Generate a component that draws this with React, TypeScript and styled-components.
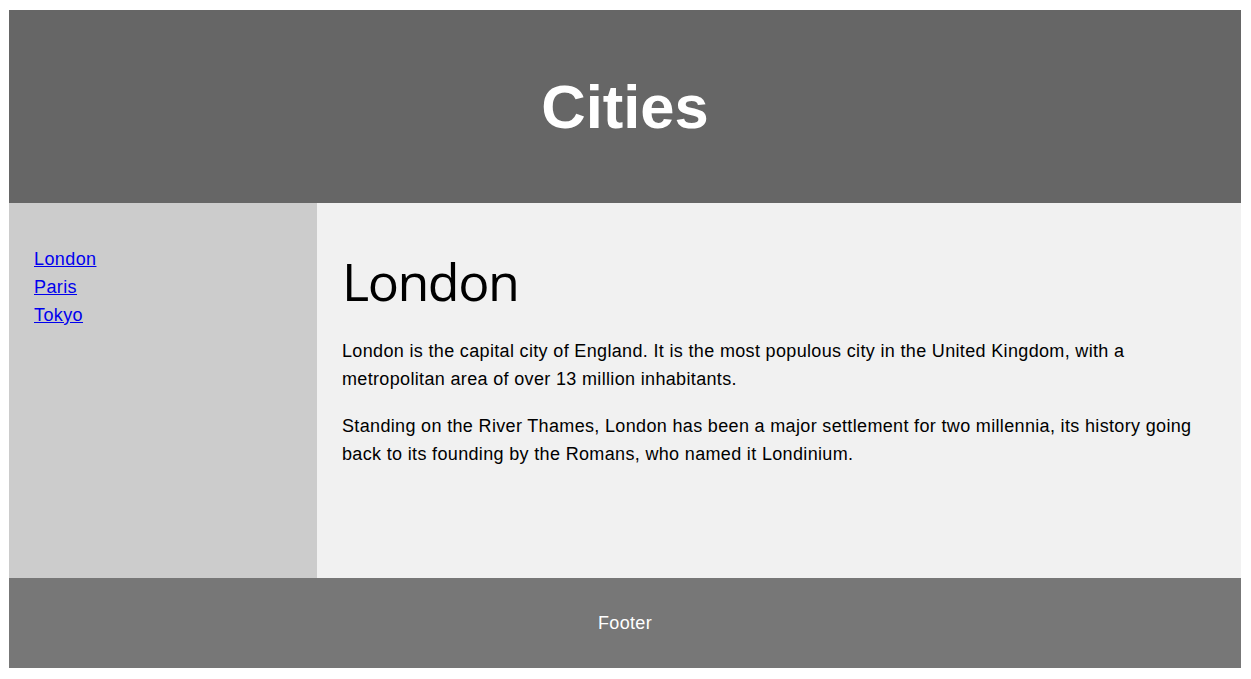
import React from 'react';
import styled, { createGlobalStyle } from 'styled-components';

const GlobalStyle = createGlobalStyle`
  body {
    margin: 10px 10px 0 9px;
    font-family: "Liberation Sans", Arial, sans-serif;
    background: #fff;
  }
`;

const Header = styled.header`
  background: #666;
  height: 193px;
  display: flex;
  align-items: center;
  justify-content: center;
  color: #fff;
`;

const Title = styled.h2`
  margin: 0;
  font-size: 61.5px;
  font-weight: bold;
  font-family: "Liberation Sans", Arial, sans-serif;
`;

const Section = styled.section`
  display: flex;
  height: 375px;
`;

const Nav = styled.nav`
  width: 25%;
  background: #ccc;
  padding: 42px 25px;
  box-sizing: border-box;
`;

const NavList = styled.ul`
  list-style: none;
  margin: 0;
  padding: 0;
`;

const NavLink = styled.a`
  font-size: 18px;
  line-height: 28px;
  letter-spacing: 0.4px;
  color: #0000ee;
  text-decoration: underline;
`;

const Article = styled.article`
  flex: 1;
  background: #f1f1f1;
  padding: 20px 25px;
  box-sizing: border-box;
`;

const Heading = styled.h1`
  margin: 28px 0 26px;
  font-family: "Open Sans", "Noto Sans", sans-serif;
  font-weight: normal;
  font-size: 52px;
  line-height: 60px;
  letter-spacing: -1.5px;
  color: #000;
`;

const Text = styled.p`
  margin: 0 0 19px;
  font-size: 18px;
  line-height: 28px;
  letter-spacing: 0.34px;
  color: #000;
`;

const Footer = styled.footer`
  background: #777;
  height: 90px;
  display: flex;
  align-items: center;
  justify-content: center;
  color: #fff;
  font-size: 18px;
  letter-spacing: 0.35px;
`;

const cities = ['London', 'Paris', 'Tokyo'];

const App = () => (
  <>
    <GlobalStyle />
    <Header>
      <Title>Cities</Title>
    </Header>
    <Section>
      <Nav>
        <NavList>
          {cities.map((c) => (
            <li key={c}>
              <NavLink href="#">{c}</NavLink>
            </li>
          ))}
        </NavList>
      </Nav>
      <Article>
        <Heading>London</Heading>
        <Text>
          London is the capital city of England. It is the most populous city in the United Kingdom, with a
          metropolitan area of over 13 million inhabitants.
        </Text>
        <Text>
          Standing on the River Thames, London has been a major settlement for two millennia, its history going
          back to its founding by the Romans, who named it Londinium.
        </Text>
      </Article>
    </Section>
    <Footer>Footer</Footer>
  </>
);

export default App;
